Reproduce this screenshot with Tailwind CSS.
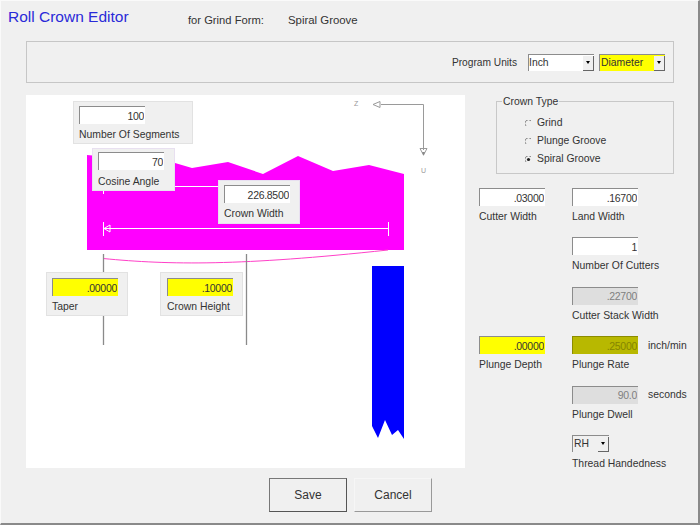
<!DOCTYPE html>
<html lang="en">
<head>
    <meta charset="UTF-8">
    <title>Roll Crown Editor</title>
    <script src="https://cdn.jsdelivr.net/npm/@tailwindcss/browser@4"></script>
</head>
<body class="bg-[#f0f0f0]">
    <div class="w-[700px] h-[525px] overflow-hidden bg-[#f0f0f0] border-t border-l border-t-[#fafafa] border-l-[#fafafa] border-r-2 border-b-2 border-r-[#8a8a8a] border-b-[#8a8a8a] font-['Liberation_Sans',Arial,sans-serif] text-[10.4px] leading-[14px] text-[#333]">

        <!-- Header -->
        <div class="flex h-[40px]">
            <div class="w-[187px] pl-[7px] pt-[7px] text-[15.5px] leading-[18px] text-[#2a2ad8]">Roll Crown Editor</div>
            <div class="w-[100px] pt-[12px] text-[11.2px]">for Grind Form:</div>
            <div class="pt-[12px] text-[11.4px]">Spiral Groove</div>
        </div>

        <!-- Program units -->
        <div class="ml-[25px] w-[648px] h-[42px] border border-[#c6c6c6] flex items-center justify-end pr-[8px]">
            <span class="mr-[11px] pt-[1px] text-[10.2px]">Program Units</span>
            <div class="w-[66px] h-[17px] flex border-t border-l border-[#8c8c8c] bg-white mr-[5px]">
                <span class="flex-1 leading-[16px]">Inch</span>
                <div class="w-[11px] h-[15px] mt-[1px] bg-[#f0f0f0] border-r border-b border-[#666] flex items-center justify-center">
                    <div class="w-0 h-0 border-l-[2.5px] border-r-[2.5px] border-t-[3px] border-l-transparent border-r-transparent border-t-black"></div>
                </div>
            </div>
            <div class="w-[66px] h-[17px] flex border-t border-l border-[#8c8c8c] bg-[#ffff00]">
                <span class="flex-1 pl-[1px] leading-[16px]">Diameter</span>
                <div class="w-[11px] h-[15px] mt-[1px] bg-[#f0f0f0] border-r border-b border-[#666] flex items-center justify-center">
                    <div class="w-0 h-0 border-l-[2.5px] border-r-[2.5px] border-t-[3px] border-l-transparent border-r-transparent border-t-black"></div>
                </div>
            </div>
        </div>

        <div class="flex ml-[25px] mt-[12px] h-[373px]">
            <!-- Crown diagram, page coordinates minus the canvas origin -->
            <div class="relative w-[439px] h-[373px] bg-white">
                <svg class="absolute inset-0" width="439" height="373" viewBox="26 95 439 373" fill="none">
                    <polygon fill="#ff00ff" points="87,155 175,163 192,168 228,162 263,174 298,156 333,171 369,165 404,174 404,250 87,250"/>
                    <polygon fill="#0000ff" points="372,266 404,266 404,439 398,430 392,435 385,420 378,438 372,426"/>
                    <!-- dimension lines -->
                    <path stroke="#ffffff" d="M175 186.5H218M103.5 190V194M103.5 222V236M103.5 228.5H388.5M388.5 222V236"/>
                    <path stroke="#ffffff" d="M104 228.5L110 225V232Z"/>
                    <path stroke="#ff40c8" d="M103 258.5C170 265 240 266 388 250"/>
                    <path stroke="#8a8a8a" stroke-width="1.3" d="M103.5 254V345M246.5 254V345"/>
                    <!-- axis -->
                    <path stroke="#9a9a9a" d="M381 104.5H423.5V150M373 104.5L380 101.5V107.5ZM423.5 155L420 148.5H427Z"/>
                    <path fill="#8a8a8a" d="M423.5 156L422 152H425Z"/>
                </svg>
                <span class="absolute left-[328px] top-[5px] text-[7px] leading-[8px] text-[#999]">Z</span>
                <span class="absolute left-[395px] top-[72px] text-[7px] leading-[8px] text-[#999]">U</span>

                <div class="absolute left-[47px] top-[6px] w-[120px] h-[43px] bg-[#f0f0f0] border border-[#e2e2e2] pl-[5px] pt-[4px]">
                    <input readonly value="100" class="block w-[66px] h-[18px] text-[10.5px] tracking-[-0.3px] bg-white border-t border-l border-[#8c8c8c] text-right pr-[1px] outline-none">
                    <div class="mt-[4px] whitespace-nowrap">Number Of Segments</div>
                </div>
                <div class="absolute left-[66px] top-[53px] w-[83px] h-[43px] bg-[#f0f0f0] border border-[#e8e0f0] pl-[5px] pt-[3px]">
                    <input readonly value="70" class="block w-[66px] h-[18px] text-[10.5px] tracking-[-0.3px] bg-white border-t border-l border-[#8c8c8c] text-right pr-[1px] outline-none">
                    <div class="mt-[5px] whitespace-nowrap">Cosine Angle</div>
                </div>
                <div class="absolute left-[192px] top-[85px] w-[82px] h-[44px] bg-[#f0f0f0] border border-[#e8e0f0] pl-[5px] pt-[4px]">
                    <input readonly value="226.8500" class="block w-[66px] h-[18px] text-[10.5px] tracking-[-0.3px] bg-white border-t border-l border-[#8c8c8c] text-right pr-[1px] outline-none">
                    <div class="mt-[4px] whitespace-nowrap">Crown Width</div>
                </div>
                <div class="absolute left-[20px] top-[177px] w-[82px] h-[44px] bg-[#f0f0f0] border border-[#e2e2e2] pl-[5px] pt-[5px]">
                    <input readonly value=".00000" class="block w-[66px] h-[18px] text-[10.5px] tracking-[-0.3px] bg-[#ffff00] border-t border-l border-[#8c8c8c] text-right pr-[1px] outline-none">
                    <div class="mt-[4px] whitespace-nowrap">Taper</div>
                </div>
                <div class="absolute left-[134px] top-[177px] w-[83px] h-[44px] bg-[#f0f0f0] border border-[#e2e2e2] pl-[6px] pt-[5px]">
                    <input readonly value=".10000" class="block w-[66px] h-[18px] text-[10.5px] tracking-[-0.3px] bg-[#ffff00] border-t border-l border-[#8c8c8c] text-right pr-[1px] outline-none">
                    <div class="mt-[4px] whitespace-nowrap">Crown Height</div>
                </div>
            </div>

            <!-- Right column -->
            <div class="w-[209px]">
                <fieldset class="ml-[31px] w-[178px] h-[79px] border border-[#c8c8c8] pl-[28px] pt-[9px]">
                    <legend class="relative top-[1px] ml-[-23px] px-[1px] leading-[12px]">Crown Type</legend>
                    <div class="flex flex-col gap-[4px]">
                        <div class="flex items-center gap-[5px] h-[14px]">
                            <svg width="7" height="7" viewBox="0 0 7 7" fill="none"><path stroke="#8a8a8a" d="M6 .8A3 3 0 0 0 1 6"/></svg>
                            <span>Grind</span>
                        </div>
                        <div class="flex items-center gap-[5px] h-[14px]">
                            <svg width="7" height="7" viewBox="0 0 7 7" fill="none"><path stroke="#8a8a8a" d="M6 .8A3 3 0 0 0 1 6"/></svg>
                            <span>Plunge Groove</span>
                        </div>
                        <div class="flex items-center gap-[5px] h-[14px]">
                            <svg width="7" height="7" viewBox="0 0 7 7" fill="none"><path stroke="#8a8a8a" d="M6 .8A3 3 0 0 0 1 6"/><circle cx="3.5" cy="3.5" r="1.6" fill="#222"/></svg>
                            <span>Spiral Groove</span>
                        </div>
                    </div>
                </fieldset>

                <div class="ml-[14px] mt-[14px] grid grid-cols-[66px_66px] gap-x-[27px] auto-rows-[49.4px]">
                    <div>
                        <input readonly value=".03000" class="block w-[66px] h-[18px] text-[10.5px] tracking-[-0.3px] bg-white border-t border-l border-[#8c8c8c] text-right pr-[1px] outline-none">
                        <div class="mt-[4px] whitespace-nowrap">Cutter Width</div>
                    </div>
                    <div>
                        <input readonly value=".16700" class="block w-[66px] h-[18px] text-[10.5px] tracking-[-0.3px] bg-white border-t border-l border-[#8c8c8c] text-right pr-[1px] outline-none">
                        <div class="mt-[4px] whitespace-nowrap">Land Width</div>
                    </div>
                    <div class="col-start-2">
                        <input readonly value="1" class="block w-[66px] h-[18px] text-[10.5px] tracking-[-0.3px] bg-white border-t border-l border-[#8c8c8c] text-right pr-[1px] outline-none">
                        <div class="mt-[4px] whitespace-nowrap">Number Of Cutters</div>
                    </div>
                    <div class="col-start-2">
                        <input readonly value=".22700" class="block w-[66px] h-[18px] text-[10.5px] tracking-[-0.3px] bg-[#dedede] border-t border-l border-[#8c8c8c] text-[#808080] text-right pr-[1px] outline-none">
                        <div class="mt-[4px] whitespace-nowrap">Cutter Stack Width</div>
                    </div>
                    <div>
                        <input readonly value=".00000" class="block w-[66px] h-[18px] text-[10.5px] tracking-[-0.3px] bg-[#ffff00] border-t border-l border-[#8c8c8c] text-right pr-[1px] outline-none">
                        <div class="mt-[4px] whitespace-nowrap">Plunge Depth</div>
                    </div>
                    <div>
                        <div class="flex items-center gap-[10px] whitespace-nowrap">
                            <input readonly value=".25000" class="block shrink-0 w-[66px] h-[18px] text-[10.5px] tracking-[-0.3px] bg-[#b8b800] border-t border-l border-[#8c8c00] text-[#858500] text-right pr-[1px] outline-none">
                            <span class="pt-[1px]">inch/min</span>
                        </div>
                        <div class="mt-[4px] whitespace-nowrap">Plunge Rate</div>
                    </div>
                    <div class="col-start-2">
                        <div class="flex items-center gap-[10px] whitespace-nowrap">
                            <input readonly value="90.0" class="block shrink-0 w-[66px] h-[18px] text-[10.5px] tracking-[-0.3px] bg-[#dedede] border-t border-l border-[#8c8c8c] text-[#808080] text-right pr-[1px] outline-none">
                            <span class="pt-[1px]">seconds</span>
                        </div>
                        <div class="mt-[4px] whitespace-nowrap">Plunge Dwell</div>
                    </div>
                    <div class="col-start-2">
                        <div class="w-[37px] h-[17px] flex border-t border-l border-[#8c8c8c] bg-[#f0f0f0]">
                            <span class="flex-1 pl-[1px] leading-[16px]">RH</span>
                            <div class="w-[11px] h-[15px] mt-[1px] bg-[#f0f0f0] border-r border-b border-[#666] flex items-center justify-center">
                                <div class="w-0 h-0 border-l-[2.5px] border-r-[2.5px] border-t-[3px] border-l-transparent border-r-transparent border-t-black"></div>
                            </div>
                        </div>
                        <div class="mt-[5px] whitespace-nowrap">Thread Handedness</div>
                    </div>
                </div>
            </div>
        </div>

        <!-- Buttons -->
        <div class="flex gap-[7px] ml-[268px] mt-[10px]">
            <button class="w-[78px] h-[34px] bg-[#f0f0f0] border border-[#777] border-r-[#555] border-b-[#555] text-[12px]">Save</button>
            <button class="w-[78px] h-[34px] bg-[#f0f0f0] border border-[#f6f6f6] border-r-[#999] border-b-[#999] text-[12px]">Cancel</button>
        </div>
    </div>
</body>
</html>
